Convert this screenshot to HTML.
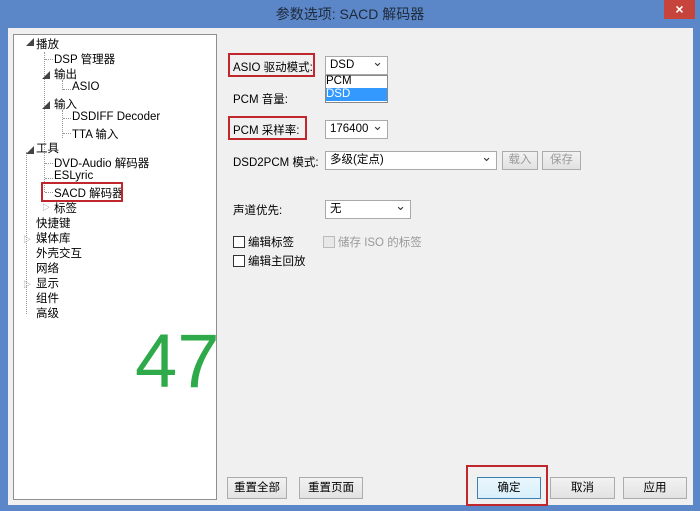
<!DOCTYPE html>
<html><head><meta charset="utf-8"><style>
*{margin:0;padding:0;box-sizing:border-box}
body{width:700px;height:511px;background:#5b86c8;position:relative;overflow:hidden;font-family:"Liberation Sans","Noto Sans CJK SC",sans-serif;font-size:11.5px;color:#000}
.a{position:absolute;white-space:nowrap}
#title{left:0;top:4px;width:700px;text-align:center;font-size:14px;color:#1e2a3a}
#close{left:664px;top:0;width:31px;height:19px;background:#c7443c;color:#fff;text-align:center;font-size:14px;line-height:18px;font-weight:bold}
#client{left:8px;top:28px;width:685px;height:477px;background:#f0f0f0}
#tree{left:13px;top:34px;width:204px;height:466px;background:#fff;border:1px solid #8e8f8f}
.red{position:absolute;border:2px solid #c0272d}
.sel{position:absolute;background:#fff;border:1px solid #a9a9a9;height:19px;padding-left:4px;line-height:17px}
.sel::after{content:"⌄";position:absolute;right:4px;top:-4px;font-size:13px;color:#333}
.btn{position:absolute;border:1px solid #acacac;background:linear-gradient(#f2f2f2,#e2e2e2);text-align:center;line-height:20px;height:22px}
.cb{position:absolute;width:12px;height:12px;border:1px solid #333;background:#fff}
.dot{position:absolute;border-left:1px dotted #999}
.hd{position:absolute;border-top:1px dotted #999}
</style></head><body>
<div class="a" id="title">参数选项: SACD 解码器</div>
<div class="a" id="close">×</div>
<div class="a" id="client"></div>
<div class="a" id="tree"></div>

<!-- tree -->
<div class="dot" style="left:44px;top:52px;height:140px"></div>
<div class="dot" style="left:26px;top:152px;height:162px"></div>
<div class="dot" style="left:62px;top:80px;height:10px"></div>
<div class="dot" style="left:62px;top:110px;height:28px"></div>
<div class="a" style="left:26px;top:37px;font-size:8px;color:#444">◢</div><div class="a" style="left:36px;top:36px">播放</div>
<div class="hd" style="left:45px;top:59px;width:8px"></div><div class="a" style="left:54px;top:51px">DSP 管理器</div>
<div class="a" style="left:42px;top:70px;font-size:8px;color:#444">◢</div><div class="a" style="left:54px;top:66px">输出</div>
<div class="hd" style="left:63px;top:89px;width:8px"></div><div class="a" style="left:72px;top:81px">ASIO</div>
<div class="a" style="left:42px;top:100px;font-size:8px;color:#444">◢</div><div class="a" style="left:54px;top:96px">输入</div>
<div class="hd" style="left:63px;top:118px;width:8px"></div><div class="a" style="left:72px;top:111px">DSDIFF Decoder</div>
<div class="hd" style="left:63px;top:133px;width:8px"></div><div class="a" style="left:72px;top:126px">TTA 输入</div>
<div class="a" style="left:26px;top:145px;font-size:8px;color:#444">◢</div><div class="a" style="left:36px;top:140px">工具</div>
<div class="hd" style="left:45px;top:163px;width:8px"></div><div class="a" style="left:54px;top:155px">DVD-Audio 解码器</div>
<div class="hd" style="left:45px;top:178px;width:8px"></div><div class="a" style="left:54px;top:170px">ESLyric</div>
<div class="hd" style="left:45px;top:192px;width:8px"></div><div class="a" style="left:54px;top:185px">SACD 解码器</div>
<div class="red" style="left:41px;top:182px;width:82px;height:20px"></div>
<div class="a" style="left:42px;top:202px;font-size:8px;color:#888">▷</div><div class="a" style="left:54px;top:200px">标签</div>
<div class="a" style="left:36px;top:215px">快捷键</div>
<div class="a" style="left:23px;top:234px;font-size:8px;color:#888">▷</div><div class="a" style="left:36px;top:230px">媒体库</div>
<div class="a" style="left:36px;top:245px">外壳交互</div>
<div class="a" style="left:36px;top:260px">网络</div>
<div class="a" style="left:23px;top:279px;font-size:8px;color:#888">▷</div><div class="a" style="left:36px;top:275px">显示</div>
<div class="a" style="left:36px;top:290px">组件</div>
<div class="a" style="left:36px;top:305px">高级</div>

<div class="a" style="left:135px;top:318px;font-size:76px;color:#2eaa4a;font-family:'Liberation Sans',sans-serif">47</div>

<!-- right -->
<div class="a" style="left:233px;top:59px">ASIO 驱动模式:</div>
<div class="red" style="left:228px;top:53px;width:87px;height:24px"></div>
<div class="sel" style="left:325px;top:56px;width:63px">DSD</div>
<div class="a" style="left:325px;top:75px;width:63px;height:28px;background:#fff;border:1px solid #888"></div>
<div class="a" style="left:326px;top:75px;line-height:13px">PCM</div>
<div class="a" style="left:326px;top:88px;width:61px;height:13px;background:#3399ff;color:#fff;line-height:13px">DSD</div>
<div class="a" style="left:233px;top:91px">PCM 音量:</div>
<div class="a" style="left:233px;top:122px">PCM 采样率:</div>
<div class="red" style="left:228px;top:116px;width:79px;height:24px"></div>
<div class="sel" style="left:325px;top:120px;width:63px">176400</div>
<div class="a" style="left:233px;top:154px">DSD2PCM 模式:</div>
<div class="sel" style="left:325px;top:151px;width:172px">多级(定点)</div>
<div class="btn" style="left:502px;top:151px;width:36px;height:19px;line-height:17px;color:#999">载入</div>
<div class="btn" style="left:542px;top:151px;width:39px;height:19px;line-height:17px;color:#999">保存</div>
<div class="a" style="left:233px;top:202px">声道优先:</div>
<div class="sel" style="left:325px;top:200px;width:86px">无</div>
<div class="cb" style="left:233px;top:236px"></div><div class="a" style="left:248px;top:234px">编辑标签</div>
<div class="cb" style="left:323px;top:236px;border-color:#bbb;background:#e8e8e8"></div><div class="a" style="left:338px;top:234px;color:#999">储存 ISO 的标签</div>
<div class="cb" style="left:233px;top:255px"></div><div class="a" style="left:248px;top:253px">编辑主回放</div>

<div class="btn" style="left:227px;top:477px;width:60px">重置全部</div>
<div class="btn" style="left:299px;top:477px;width:64px">重置页面</div>
<div class="red" style="left:466px;top:465px;width:82px;height:41px"></div>
<div class="btn" style="left:477px;top:477px;width:64px;border-color:#3c7fb1;background:linear-gradient(#eaf6fd,#d9f0fc)">确定</div>
<div class="btn" style="left:550px;top:477px;width:65px">取消</div>
<div class="btn" style="left:623px;top:477px;width:64px">应用</div>
</body></html>
